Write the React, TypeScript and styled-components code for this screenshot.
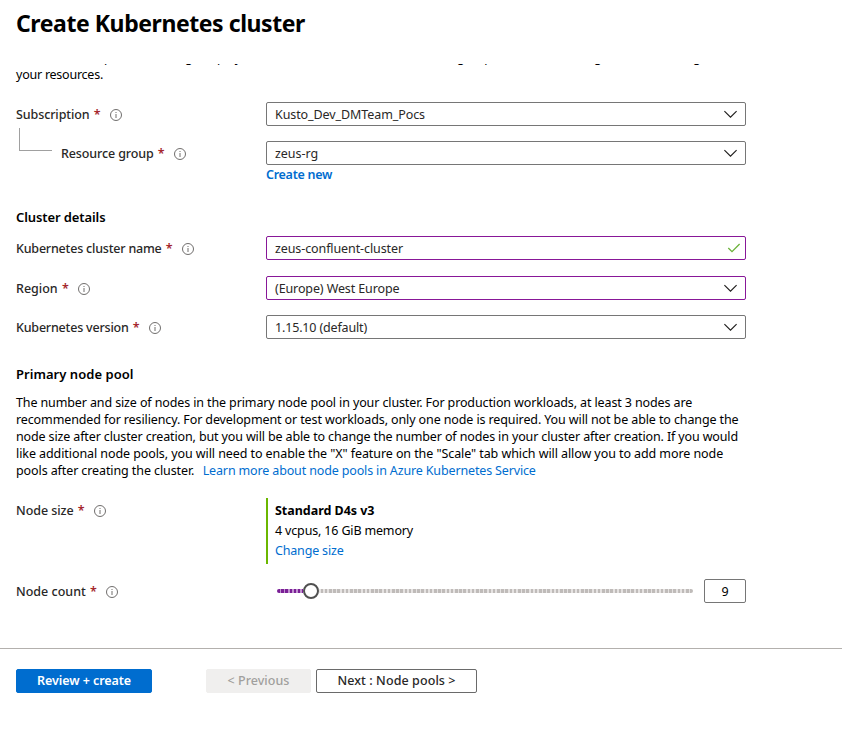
import React from 'react';
import styled, { createGlobalStyle } from 'styled-components';

const Global = createGlobalStyle`
  *, *::before, *::after { box-sizing: border-box; }
  body {
    margin: 0;
    background: #fff;
    color: #000;
    font-family: "Noto Sans", "Open Sans", sans-serif;
    font-size: 12.5px;
    line-height: 17px;
    overflow: hidden;
  }
`;

const Page = styled.div`
  width: 842px;
  height: 730px;
  display: flex;
  flex-direction: column;
`;

const Header = styled.header`
  height: 64px;
  padding: 7px 16px 0;
`;

const Title = styled.h1`
  margin: 0;
  font-size: 23px;
  line-height: 32px;
  font-weight: 700;
  letter-spacing: -0.43px;
`;

const Scroller = styled.main`
  height: 584px;
  padding: 0 16px;
  overflow: hidden;
`;

const Intro = styled.p`
  margin: -15px 0 0;
  white-space: nowrap;
`;

const Line = styled.span<{ $ls?: number }>`
  display: block;
  white-space: nowrap;
  letter-spacing: ${(p) => p.$ls ?? 0}px;
`;

const Run = styled.span<{ $ls?: number }>`
  white-space: nowrap;
  letter-spacing: ${(p) => p.$ls ?? 0}px;
`;

const Row = styled.div<{ $top: number }>`
  display: grid;
  grid-template-columns: 250px 480px;
  margin-top: ${(p) => p.$top}px;
`;

const LabelCell = styled.div`
  display: flex;
  align-items: center;
  height: 24px;
  color: #292827;
  font-weight: 500;
`;

const Connector = styled.span`
  align-self: flex-start;
  width: 33px;
  height: 23px;
  margin: -13px 9px 0 3px;
  border: solid #a0a0a0;
  border-width: 0 0 1px 1px;
`;

const Star = styled.span`
  width: 7px;
  margin-left: 4.2px;
  color: #a4262c;
  font-weight: 600;
`;

const InfoSvg = styled.svg`
  display: block;
  width: 12px;
  height: 12px;
  margin: 1px 0 0 9px;
`;

const Info = () => (
  <InfoSvg viewBox="0 0 12 12">
    <circle cx="6" cy="6" r="5.5" fill="none" stroke="#605e5c" strokeWidth="0.9" />
    <path d="M6 5v4M6 3v1" stroke="#605e5c" strokeWidth="0.9" />
  </InfoSvg>
);

const Field = styled.div<{ $changed?: boolean }>`
  display: flex;
  align-items: center;
  justify-content: space-between;
  height: 24px;
  padding: 0 7px 0 8px;
  border: 1px solid ${(p) => (p.$changed ? '#881798' : '#767676')};
  border-radius: 2px;
  color: #292827;
`;

const FieldIcon = styled.svg<{ $flush?: boolean }>`
  width: 14px;
  height: 10px;
  margin-right: ${(p) => (p.$flush ? -3 : 0)}px;
  fill: none;
`;

const Chevron = () => (
  <FieldIcon viewBox="0 0 14 10">
    <path d="M0.4 2.2L6.5 8.2L12.6 2.2" stroke="#201f1e" strokeWidth="1.15" />
  </FieldIcon>
);

const Check = () => (
  <FieldIcon $flush viewBox="0 0 14 10">
    <path d="M1.3 5L5 8.6L12.6 1" stroke="#6bb23a" strokeWidth="1.3" />
  </FieldIcon>
);

const Link = styled.a<{ $ls?: number; $strong?: boolean }>`
  color: #006dcf;
  font-weight: ${(p) => (p.$strong ? 600 : 400)};
  letter-spacing: ${(p) => p.$ls ?? 0}px;
  text-decoration: none;
  white-space: nowrap;
`;

const Below = styled.div`
  height: 20px;
  padding-top: 1px;
`;

const Heading = styled.h2<{ $top: number; $ls: number }>`
  margin: ${(p) => p.$top}px 0 0;
  font-size: 13px;
  line-height: 18px;
  font-weight: 600;
  letter-spacing: ${(p) => p.$ls}px;
`;

const Paragraph = styled.p`
  margin: 11px 0 0;
`;

const LearnMore = styled(Link)`
  margin-left: 8.5px;
`;

const SizeCard = styled.div`
  height: 66px;
  padding: 3px 0 0 7px;
  border-left: 2px solid #6bb700;
  line-height: 20px;
`;

const SizeName = styled(Line)`
  font-weight: 700;
`;

const SliderCell = styled.div`
  display: flex;
  align-items: center;
  justify-content: space-between;
  height: 24px;
  padding-left: 11px;
`;

const Track = styled.div`
  display: flex;
  align-items: center;
  width: 416px;
`;

const Bar = styled.div<{ $on?: boolean }>`
  flex: ${(p) => (p.$on ? '0 0 26px' : '1')};
  height: 4px;
  border-radius: ${(p) => (p.$on ? '2px 0 0 2px' : '0 2px 2px 0')};
  background: ${(p) =>
    p.$on
      ? 'repeating-linear-gradient(90deg, #7a1f96 0 2.5px, #c193cf 2.5px 4.2px)'
      : 'repeating-linear-gradient(90deg, #e6e3e2 0 1.7px, #bfbbb9 1.7px 4.2px)'};
`;

const Thumb = styled.div`
  width: 16px;
  height: 16px;
  border: 2px solid #505050;
  border-radius: 50%;
  background: #fff;
`;

const CountBox = styled.div`
  width: 42px;
  height: 24px;
  border: 1px solid #767676;
  border-radius: 2px;
  line-height: 23px;
  text-align: center;
`;

const Footer = styled.footer`
  display: flex;
  height: 82px;
  padding: 20px 16px 0;
  border-top: 1px solid #b3b0ad;
`;

const Button = styled.button<{ $kind: 'primary' | 'disabled' | 'plain'; $w: number; $gap?: number; $ls: number }>`
  width: ${(p) => p.$w}px;
  height: 24px;
  margin: 0 0 0 ${(p) => p.$gap ?? 0}px;
  padding: 0;
  border: 1px solid ${(p) => ({ primary: '#006dcf', disabled: '#f0efee', plain: '#6a6a6a' })[p.$kind]};
  border-radius: 2px;
  background: ${(p) => ({ primary: '#006dcf', disabled: '#f0efee', plain: '#fff' })[p.$kind]};
  color: ${(p) => ({ primary: '#fff', disabled: '#a19f9d', plain: '#292827' })[p.$kind]};
  font: ${(p) => (p.$kind === 'primary' ? 600 : 500)} 12.5px/22px "Noto Sans", "Open Sans", sans-serif;
  letter-spacing: ${(p) => p.$ls}px;
  white-space: nowrap;
`;

function Label({ text, ls = 0, child }: { text: string; ls?: number; child?: boolean }) {
  return (
    <LabelCell>
      {child && <Connector />}
      <Run $ls={ls}>{text}</Run>
      <Star>*</Star>
      <Info />
    </LabelCell>
  );
}

export default function App() {
  return (
    <Page>
      <Global />
      <Header>
        <Title>Create Kubernetes cluster</Title>
      </Header>
      <Scroller>
        <Intro>
          <Line $ls={-0.13}>
            Select a subscription to manage deployed resources and costs. Use resource groups like folders to organize and manage all
          </Line>
          <Line $ls={-0.24}>your resources.</Line>
        </Intro>

        <Row $top={19}>
          <Label text="Subscription" ls={-0.1} />
          <Field><Run $ls={-0.09}>Kusto_Dev_DMTeam_Pocs</Run><Chevron /></Field>
        </Row>
        <Row $top={15}>
          <Label text="Resource group" ls={-0.12} child />
          <div>
            <Field><Run $ls={-0.05}>zeus-rg</Run><Chevron /></Field>
            <Below><Link $strong $ls={-0.28}>Create new</Link></Below>
          </div>
        </Row>

        <Heading $top={23} $ls={-0.1}>Cluster details</Heading>
        <Row $top={10}>
          <Label text="Kubernetes cluster name" ls={-0.2} />
          <Field $changed><Run $ls={-0.1}>zeus-confluent-cluster</Run><Check /></Field>
        </Row>
        <Row $top={16}>
          <Label text="Region" ls={0} />
          <Field $changed><Run $ls={-0.11}>(Europe) West Europe</Run><Chevron /></Field>
        </Row>
        <Row $top={15}>
          <Label text="Kubernetes version" ls={-0.2} />
          <Field><Run $ls={-0.16}>1.15.10 (default)</Run><Chevron /></Field>
        </Row>

        <Heading $top={26} $ls={0.04}>Primary node pool</Heading>
        <Paragraph>
          <Line $ls={-0.12}>The number and size of nodes in the primary node pool in your cluster. For production workloads, at least 3 nodes are</Line>
          <Line $ls={-0.113}>recommended for resiliency. For development or test workloads, only one node is required. You will not be able to change the</Line>
          <Line $ls={-0.134}>node size after cluster creation, but you will be able to change the number of nodes in your cluster after creation. If you would</Line>
          <Line $ls={-0.08}>like additional node pools, you will need to enable the "X" feature on the "Scale" tab which will allow you to add more node</Line>
          <Line $ls={-0.1}>
            pools after creating the cluster.
            <LearnMore $ls={-0.147}>Learn more about node pools in Azure Kubernetes Service</LearnMore>
          </Line>
        </Paragraph>

        <Row $top={19}>
          <Label text="Node size" ls={-0.06} />
          <SizeCard>
            <SizeName $ls={-0.03}>Standard D4s v3</SizeName>
            <Line $ls={-0.16}>4 vcpus, 16 GiB memory</Line>
            <Link $ls={-0.18}>Change size</Link>
          </SizeCard>
        </Row>
        <Row $top={15}>
          <Label text="Node count" />
          <SliderCell>
            <Track>
              <Bar $on />
              <Thumb />
              <Bar />
            </Track>
            <CountBox>9</CountBox>
          </SliderCell>
        </Row>
      </Scroller>
      <Footer>
        <Button $kind="primary" $w={136} $ls={-0.07}>Review + create</Button>
        <Button $kind="disabled" $w={105} $gap={54} $ls={0.05}>&lt; Previous</Button>
        <Button $kind="plain" $w={161} $gap={5} $ls={0.09}>Next : Node pools &gt;</Button>
      </Footer>
    </Page>
  );
}
